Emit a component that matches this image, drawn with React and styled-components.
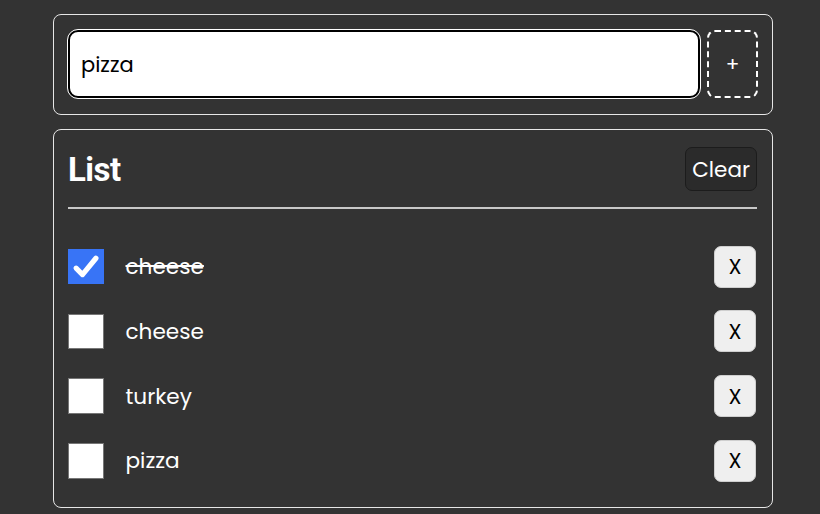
import React, { useState } from 'react';
import styled, { createGlobalStyle } from 'styled-components';

const GlobalStyle = createGlobalStyle`
  body {
    margin: 0;
    background: #333333;
    font-family: Poppins, "Open Sans", "Noto Sans", sans-serif;
    color: #fff;
  }
`

const Page = styled.div`
  width: 720px;
  margin-left: 53px;
  padding-top: 14px;
  display: flex;
  flex-direction: column;
  gap: 14px;
`

const Card = styled.div`
  border: 1px solid #e6e6e6;
  border-radius: 8px;
  padding: ${props => props.pad || '14px'};
`

const AddForm = styled.form`
  display: flex;
  gap: 7px;
  align-items: stretch;
`

const TextInput = styled.input`
  flex: 1;
  min-width: 0;
  height: 68px;
  box-sizing: border-box;
  border: 2px solid #000;
  outline: 1px solid #fff;
  border-radius: 10px;
  background: #fff;
  padding: 0 11px;
  font-family: inherit;
  font-size: 21px;
  color: #000;
`

const AddButton = styled.button`
  width: 51px;
  height: 68px;
  box-sizing: border-box;
  border: 2px dashed #fff;
  border-radius: 8px;
  background: transparent;
  color: #fff;
  font-family: inherit;
  font-size: 20px;
  padding: 0;
`

const Header = styled.div`
  display: flex;
  justify-content: space-between;
  align-items: center;
  padding-bottom: 16px;
  border-bottom: 2px solid #c8c8c8;
`

const Title = styled.h1`
  margin: 0;
  font-family: Roboto, "Liberation Sans", sans-serif;
  font-size: 33px;
  font-weight: 700;
  letter-spacing: -0.5px;
`

const ClearButton = styled.button`
  height: 44px;
  padding: 0 6px;
  background: #2b2b2b;
  border: 1px solid #1c1c1c;
  border-radius: 7px;
  color: #fff;
  font-family: inherit;
  font-size: 21.5px;
`

const Items = styled.ul`
  list-style: none;
  margin: 0;
  padding: 36.5px 0 0;
  display: flex;
  flex-direction: column;
  gap: 22.8px;
`

const Row = styled.li`
  display: flex;
  align-items: center;
  height: 42px;
`

const Check = styled.span`
  width: 35.5px;
  height: 35.5px;
  box-sizing: border-box;
  display: flex;
  align-items: center;
  justify-content: center;
  background: ${props => props.checked ? '#3874f6' : '#fff'};
  border: ${props => props.checked ? 'none' : '1px solid #767676'};
`

const Label = styled.span`
  flex: 1;
  margin-left: 22px;
  font-size: 21.6px;
  text-decoration: ${props => props.done ? 'line-through' : 'none'};
`

const RemoveButton = styled.button`
  width: 42px;
  height: 42px;
  margin-right: 1px;
  background: #efefef;
  border: 1px solid #cfcfcf;
  border-radius: 7px;
  color: #000;
  font-family: inherit;
  font-size: 21px;
  padding: 0;
`

const CheckMark = () => (
  <svg width="28" height="28" viewBox="0 0 24 24">
    <path d="M3.5 13 L9 18.5 L20.5 4.5" fill="none" stroke="#fff" strokeWidth="4.4" strokeLinecap="round" strokeLinejoin="round" />
  </svg>
)

const App = () => {
  const [items] = useState([
    { id: 1, text: 'cheese', done: true },
    { id: 2, text: 'cheese', done: false },
    { id: 3, text: 'turkey', done: false },
    { id: 4, text: 'pizza', done: false },
  ])

  return (
    <Page>
      <GlobalStyle />
      <Card pad="15px 14px 16px">
        <AddForm onSubmit={e => e.preventDefault()}>
          <TextInput defaultValue="pizza" />
          <AddButton type="submit">+</AddButton>
        </AddForm>
      </Card>
      <Card pad="17px 15px 25px 14px">
        <Header>
          <Title>List</Title>
          <ClearButton>Clear</ClearButton>
        </Header>
        <Items>
          {items.map(item => (
            <Row key={item.id}>
              <Check checked={item.done}>{item.done && <CheckMark />}</Check>
              <Label done={item.done}>{item.text}</Label>
              <RemoveButton>X</RemoveButton>
            </Row>
          ))}
        </Items>
      </Card>
    </Page>
  )
}

export default App;
